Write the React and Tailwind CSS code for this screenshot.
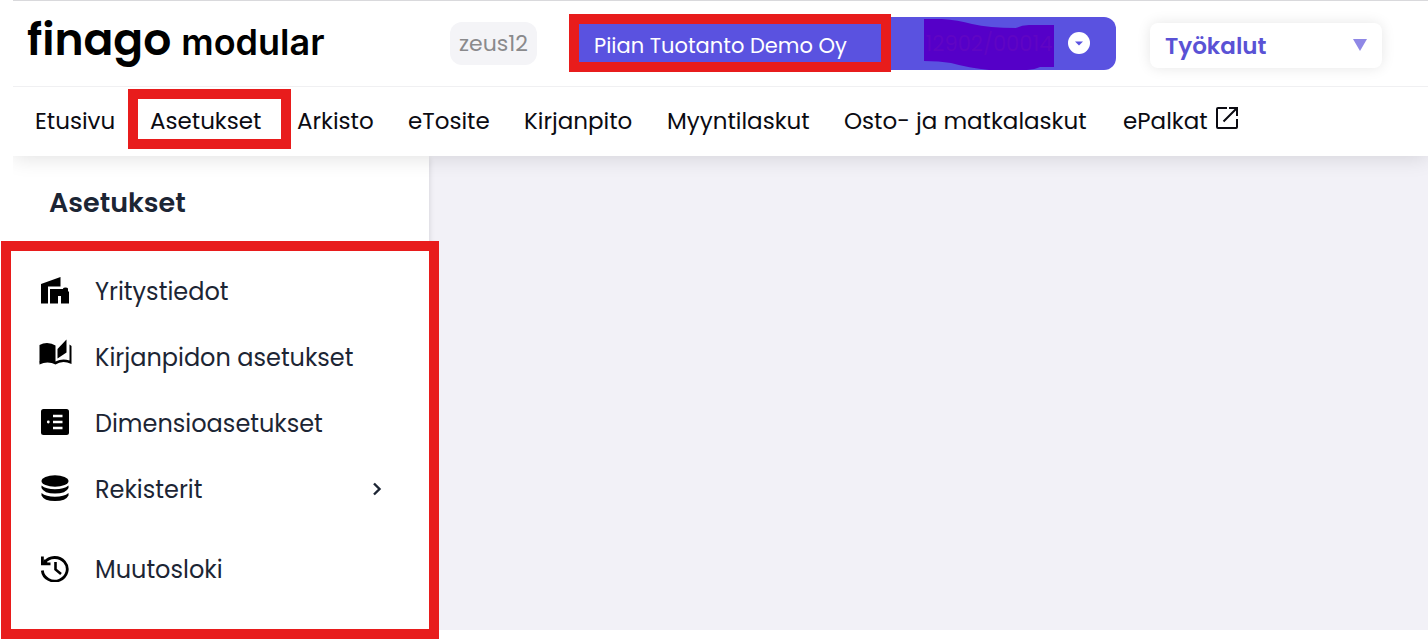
import React from "react";

const navItems = [
  { label: "Etusivu", width: "w-[81px]" },
  { label: "Asetukset", width: "w-[113px]", marked: true },
  { label: "Arkisto", width: "w-[77px]" },
  { label: "eTosite", width: "w-[82px]" },
  { label: "Kirjanpito", width: "w-[109px]" },
  { label: "Myyntilaskut", width: "w-[143px]" },
  { label: "Osto- ja matkalaskut", width: "w-[245px]" },
  { label: "ePalkat", width: "w-[116px]", external: true },
];

function ExternalIcon() {
  return (
    <svg viewBox="0 0 22 22" className="mb-2 size-[22px] shrink-0" fill="none" stroke="currentColor" strokeWidth="2" aria-hidden="true">
      <path d="M11 1H2Q1 1 1 2V20Q1 21 2 21H20Q21 21 21 20V12" />
      <path d="M13 1H21V9M21 1L7.500 14.500" />
    </svg>
  );
}

function BuildingIcon() {
  return (
    <svg viewBox="0 0 28 27" className="h-[27px] w-7" fill="currentColor" aria-hidden="true">
      <path d="M0 26.500V7L19.500 0V9.500H7V26.500Z" />
      <path d="M9 26.500V12H22V11.500Q22.500 10.500 24.500 10.500Q26.500 10.500 27 11.500V14L28 15V26.500H20V19H17V26.500Z" />
    </svg>
  );
}

function BookIcon() {
  return (
    <svg viewBox="0 0 33 27" className="-mt-2 h-[27px] w-[33px]" fill="currentColor" aria-hidden="true">
      <path d="M0.500 6Q4 4 8 4Q13 4 16.500 6.500V23.500Q13 22 8 22Q4.500 22 0.500 23.500Z" />
      <path d="M18.500 10L27.500 0.500V13.500L18.500 19.500Z" />
      <path d="M0.500 22.500Q4.500 20.500 8.500 20.500Q13 20.500 16.500 22.500Q20.500 20.500 24.500 20.500Q27.500 20.500 30.500 21.500V5.500L32.500 7V25Q28 23 24.500 23Q20 23 16.500 25.500Q13 23.500 8.500 23.500Q4.500 23.500 0.500 25.500Z" />
    </svg>
  );
}

function ListIcon() {
  return (
    <svg viewBox="0 0 28 26" className="h-[26px] w-7" aria-hidden="true">
      <rect width="28" height="26" rx="2.500" fill="currentColor" />
      <path d="M12 7H21.500M12 13H21.500M12 19H21.500" stroke="white" strokeWidth="2.600" />
      <circle cx="7.300" cy="13" r="1.400" fill="white" />
    </svg>
  );
}

function DatabaseIcon() {
  return (
    <svg viewBox="0 0 28 26" className="h-[26px] w-7" fill="currentColor" aria-hidden="true">
      <ellipse cx="14" cy="6" rx="13.500" ry="5.800" />
      <path d="M0.500 10.500Q5 14.300 14 14.300Q23 14.300 27.500 10.500V13Q25 18.500 14 18.500Q3 18.500 0.500 13Z" />
      <path d="M0.500 18Q5 21.800 14 21.800Q23 21.800 27.500 18V20.500Q25 26 14 26Q3 26 0.500 20.500Z" />
    </svg>
  );
}

function HistoryIcon() {
  return (
    <svg viewBox="0 0 30 27" className="h-[27px] w-[30px]" fill="none" stroke="currentColor" strokeWidth="2.800" aria-hidden="true">
      <path d="M4.500 7.500A12.500 11.800 0 1 1 2.300 15.500" />
      <path d="M2.400 1.500V8.800H10.500" />
      <path d="M4 4L8.500 9H3Z" fill="currentColor" stroke="none" />
      <path d="M15.500 7V14.500L21 19" strokeWidth="2.600" />
    </svg>
  );
}

const menuItems = [
  { label: "Yritystiedot", Icon: BuildingIcon },
  { label: "Kirjanpidon asetukset", Icon: BookIcon },
  { label: "Dimensioasetukset", Icon: ListIcon },
  { label: "Rekisterit", Icon: DatabaseIcon, expandable: true },
  { label: "Muutosloki", Icon: HistoryIcon, spaced: true },
];

function Header() {
  return (
    <header className="flex h-[87px] items-center border-y border-t-[#d9d9dc] border-b-[#f0f0f2]">
      <a href="#" className="flex w-[437px] shrink-0 items-baseline gap-2.5 pb-2 pl-3.5 leading-none text-black" aria-label="finago modular">
        <span className="text-[44px] font-semibold">finago</span>
        <span className="font-['Inter',sans-serif] text-4xl leading-none font-semibold">modular</span>
      </a>
      <span className="flex h-[43px] w-[87px] shrink-0 items-center justify-center rounded-xl bg-[#f4f4f7] text-[22px] text-[#8a8a8c]">
        zeus12
      </span>
      <div className="relative ml-[34px] h-[53px] w-[545px] shrink-0">
        <button type="button" className="flex size-full items-center rounded-xl bg-[#5a52e0] pl-[23px] text-left text-white">
          <span className="w-[330px] pt-1 text-[21px]">Piian Tuotanto Demo Oy</span>
          <span className="relative flex h-[52px] w-[130px] items-center justify-center text-[21px] text-[#5f05c4]">
            <svg viewBox="0 0 130 52" className="absolute inset-0 size-full" aria-hidden="true">
              <path fill="#5500c8" d="M0 1H18Q34 2 48 6Q65 10 92 10Q98 7 105 7H130V49H116Q108 53 90 52H65Q45 50 27 45Q15 43 0 43Z" />
            </svg>
            <span className="relative">12902/00014</span>
          </span>
          <svg viewBox="0 0 22 22" className="mb-0.5 ml-3.5 size-[22px]" aria-hidden="true">
            <circle cx="11" cy="11" r="11" fill="white" />
            <path d="M7 9.500H15L11 13.500Z" fill="#5a52e0" />
          </svg>
        </button>
        <span className="pointer-events-none absolute -top-[3px] -left-0.5 h-[58px] w-[322px] border-10 border-[#e81c1c]" />
      </div>
      <div className="relative mt-1 ml-[34px] h-[45px] w-[232px] shrink-0">
        <select aria-label="Työkalut" className="size-full appearance-none rounded-lg bg-white pt-0.5 pl-[15px] text-[23px] font-semibold text-[#5a52d5] shadow-[0_0_14px_rgba(0,0,0,0.10)]">
          <option>Työkalut</option>
        </select>
        <svg viewBox="0 0 14 12" className="pointer-events-none absolute top-4 right-[15px] h-3 w-3.5" aria-hidden="true">
          <path d="M0 0H14L7 12Z" fill="#8f88e6" />
        </svg>
      </div>
    </header>
  );
}

function Navigation() {
  return (
    <nav className="relative z-10 flex h-[69px] items-center gap-[34px] bg-white pl-[22px] text-[23px] text-[#0b0b12] shadow-[0_2px_20px_rgba(0,0,0,0.12)] [clip-path:inset(0_0_-30px_0)]">
      {navItems.map(({ label, width, marked, external }) => (
        <a key={label} href="#" className={`relative flex shrink-0 items-center gap-2 whitespace-nowrap ${width}`}>
          {label}
          {external && <ExternalIcon />}
          {marked && <span className="pointer-events-none absolute -top-[15px] -left-[22px] h-[60px] w-[163px] border-10 border-[#e81c1c]" />}
        </a>
      ))}
    </nav>
  );
}

function Sidebar() {
  return (
    <aside className="w-[416px] shrink-0 bg-white text-[#1c2534] shadow-[3px_0_5px_-2px_rgba(0,0,0,0.10)]">
      <h1 className="flex h-[103px] items-center pb-2 pl-9 text-[27px] font-semibold">Asetukset</h1>
      <div className="relative pb-[27px]">
        <ul>
          {menuItems.map(({ label, Icon, expandable, spaced }) => (
            <li key={label} className={spaced ? "mt-3.5" : ""}>
              <a href="#" className="flex h-[66px] items-center text-2xl">
                <span className="flex w-[82px] justify-center pb-1 pl-0.5 text-black">
                  <Icon />
                </span>
                {label}
                {expandable && (
                  <svg viewBox="0 0 10 14" className="mr-[47px] mb-0.5 ml-auto h-3.5 w-2.5" fill="none" stroke="currentColor" strokeWidth="2.400" aria-hidden="true">
                    <path d="M2 1.500L7.500 7L2 12.500" />
                  </svg>
                )}
              </a>
            </li>
          ))}
        </ul>
        <span className="pointer-events-none absolute -top-[18px] -right-2.5 -bottom-[9px] -left-3 z-20 border-10 border-[#e81c1c]" />
      </div>
    </aside>
  );
}

export default function App() {
  return (
    <div className="min-h-screen overflow-hidden bg-white pb-2.5 pl-[13px] font-['Poppins','Inter',sans-serif]">
      <Header />
      <Navigation />
      <div className="flex bg-[#f2f1f7]">
        <Sidebar />
        <main className="flex-1" />
      </div>
    </div>
  );
}
